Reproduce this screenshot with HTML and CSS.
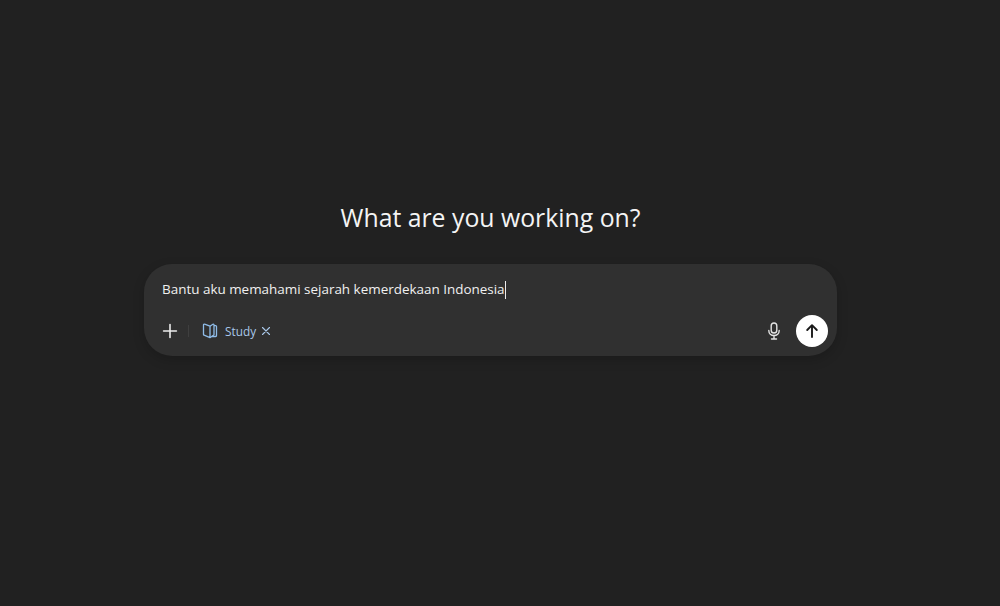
FILE: index.html
```html
<!DOCTYPE html>
<html lang="en">
<head>
<meta charset="utf-8">
<title>What are you working on?</title>
<link rel="stylesheet" href="styles.css">
</head>
<body>
<main class="page">
  <h1 class="title">What are you working on?</h1>
  <form class="composer">
    <div class="prompt"><span>Bantu aku memahami sejarah kemerdekaan Indonesia</span><span class="caret"></span></div>
    <div class="toolbar">
      <div class="tools">
        <svg class="plus" width="20" height="20" viewBox="0 0 20 20" fill="none" stroke="#ececec" stroke-width="1.6" stroke-linecap="round"><path d="M10 3.6v12.8M3.6 10h12.8"/></svg>
        <span class="divider"></span>
        <div class="chip">
          <svg class="book" width="18" height="18" viewBox="0 0 18 18" fill="none" stroke="#8fbce8" stroke-width="1.3" stroke-linejoin="round"><path d="M9 4.2 3.6 2.2A.8.8 0 0 0 2.500 3v9.400c0 .4.2.7.6.8L9 15.600V4.200Z"/><path d="m9 4.200 2.900-1.900c.5-.3 1.100 0 1.100.6v9.500c0 .4-.2.7-.5.9L9 15.600"/><path d="M13 3.600h1.600c.5 0 .9.4.9.9v9.100c0 .5-.4.9-.9.9H11"/></svg>
          <span class="chip-label">Study</span>
          <svg class="close" width="10" height="10" viewBox="0 0 10 10" fill="none" stroke="#a9c8ea" stroke-width="1.1" stroke-linecap="round"><path d="m1.500 1.500 7 7M8.500 1.500l-7 7"/></svg>
        </div>
      </div>
      <div class="actions">
        <svg class="mic" width="18" height="20" viewBox="0 0 18 20" fill="none" stroke="#e4e4e4" stroke-width="1.4" stroke-linecap="round"><rect x="6.200" y="2" width="5.600" height="10" rx="2.800"/><path d="M3.800 9.500c0 3 2.300 5 5.200 5s5.200-2 5.200-5M9 14.500V18M6.500 18h5"/></svg>
        <button class="send" type="button" aria-label="Send">
          <svg width="16" height="16" viewBox="0 0 16 16" fill="none" stroke="#1a1a1a" stroke-width="1.900" stroke-linecap="round" stroke-linejoin="round"><path d="M8 14V2.500M3.200 7 8 2.200 12.800 7"/></svg>
        </button>
      </div>
    </div>
  </form>
</main>
</body>
</html>
```
FILE: styles.css
```css
* { box-sizing: border-box; }
html, body { margin: 0; height: 100%; }
body {
  background: #212121;
  color: #ececec;
  font-family: "Open Sans", "Noto Sans", "Liberation Sans", sans-serif;
  overflow: hidden;
}
.page {
  display: flex;
  flex-direction: column;
  align-items: center;
  padding-top: 199px;
  padding-right: 19px;
}
.title {
  margin: 0 0 29px;
  font-size: 24.8px;
  line-height: 36px;
  font-weight: 400;
  color: #f4f4f4;
}
.composer {
  width: 693px;
  height: 92px;
  background: #303030;
  border-radius: 28px;
  box-shadow: 0 4px 12px rgba(0, 0, 0, 0.18);
  padding: 15px 9px 9px 18px;
  display: flex;
  flex-direction: column;
  justify-content: space-between;
}
.prompt {
  display: flex;
  align-items: center;
  font-size: 13.45px;
  line-height: 21px;
  color: #f0f0f0;
}
.caret {
  width: 1px;
  height: 18px;
  background: #ececec;
}
.toolbar {
  display: flex;
  align-items: center;
  justify-content: space-between;
}
.tools, .actions, .chip { display: flex; align-items: center; }
.plus { margin-left: -2px; margin-right: 8px; }
.divider { width: 1px; height: 12px; background: #3f3f3f; margin-right: 12px; }
.chip { color: #a9c8ea; font-size: 11.8px; }
.book { margin-right: 6px; }
.chip-label { margin-right: 5px; }
.mic { margin-right: 13px; }
.send {
  width: 32px;
  height: 32px;
  padding: 0;
  border: 0;
  border-radius: 50%;
  background: #fff;
  display: flex;
  align-items: center;
  justify-content: center;
}
```
